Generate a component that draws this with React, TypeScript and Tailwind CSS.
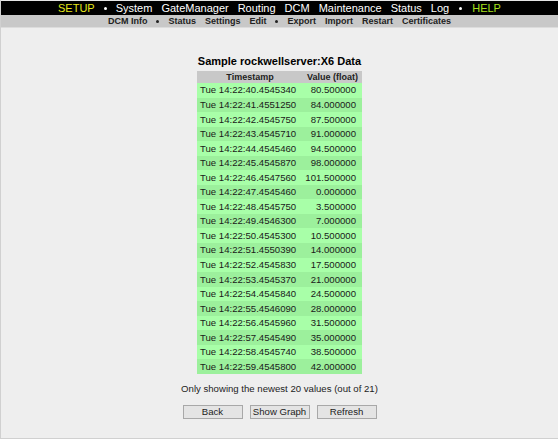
const rows: [string, string][] = [
  ['Tue 14:22:40.4545340', '80.500000'],
  ['Tue 14:22:41.4551250', '84.000000'],
  ['Tue 14:22:42.4545750', '87.500000'],
  ['Tue 14:22:43.4545710', '91.000000'],
  ['Tue 14:22:44.4545460', '94.500000'],
  ['Tue 14:22:45.4545870', '98.000000'],
  ['Tue 14:22:46.4547560', '101.500000'],
  ['Tue 14:22:47.4545460', '0.000000'],
  ['Tue 14:22:48.4545750', '3.500000'],
  ['Tue 14:22:49.4546300', '7.000000'],
  ['Tue 14:22:50.4545300', '10.500000'],
  ['Tue 14:22:51.4550390', '14.000000'],
  ['Tue 14:22:52.4545830', '17.500000'],
  ['Tue 14:22:53.4545370', '21.000000'],
  ['Tue 14:22:54.4545840', '24.500000'],
  ['Tue 14:22:55.4546090', '28.000000'],
  ['Tue 14:22:56.4545960', '31.500000'],
  ['Tue 14:22:57.4545490', '35.000000'],
  ['Tue 14:22:58.4545740', '38.500000'],
  ['Tue 14:22:59.4545800', '42.000000'],
];

const mainNav = ['System', 'GateManager', 'Routing', 'DCM', 'Maintenance', 'Status', 'Log'];

const Dot = ({ className = '' }: { className?: string }) => (
  <span className={`inline-block w-[3px] h-[3px] rounded-full bg-white ${className}`} />
);

const SubDot = () => <span className="inline-block w-[3px] h-[3px] rounded-full bg-[#222]" />;

export default function App() {
  return (
    <div
      className="w-[558px] h-[439px] flex flex-col bg-[#eeeeee] border-l border-b border-[#d0d0d0] overflow-hidden"
      style={{ fontFamily: '"Liberation Sans", Arial, sans-serif' }}
    >
      {/* top menu */}
      <div className="h-px bg-[#e6e6e6]" />
      <div className="h-[14px] bg-black flex items-center justify-center text-[11px] leading-none text-white">
        <span className="text-[#e6e619]">SETUP</span>
        <Dot className="mx-[9px]" />
        <div className="flex gap-[9px]">
          {mainNav.map((item) => (
            <span key={item}>{item}</span>
          ))}
        </div>
        <Dot className="mx-[10px]" />
        <span className="text-[#a8e01c]">HELP</span>
      </div>

      {/* sub menu */}
      <div className="h-[13px] bg-[#c8c8c8] border-b border-[#dcdcdc] flex items-center justify-center gap-[9px] text-[9px] font-bold leading-none text-[#222]">
        <span>DCM Info</span>
        <SubDot />
        <span>Status</span>
        <span>Settings</span>
        <span>Edit</span>
        <SubDot />
        <span>Export</span>
        <span>Import</span>
        <span>Restart</span>
        <span>Certificates</span>
      </div>

      {/* content */}
      <div className="flex flex-col items-center pt-[28px]">
        <div className="text-[11px] font-bold text-black leading-none mb-[4px]">Sample rockwellserver:X6 Data</div>
        <div className="w-[165px] text-[9.6px] leading-none">
          <div className="grid grid-cols-[106px_59px] h-[12px] items-center bg-[#c8c8c8] font-bold text-[9px] text-[#222]">
            <span className="text-center">Timestamp</span>
            <span className="text-center">Value (float)</span>
          </div>
          {rows.map(([ts, val], i) => (
            <div
              key={ts}
              className={`grid grid-cols-[106px_59px] h-[14.55px] items-center text-[#1a1a1a] ${
                i % 2 === 0 ? 'bg-[#a8ffa8]' : 'bg-[#9cf09c]'
              }`}
            >
              <span className="pl-[3px] whitespace-nowrap">{ts}</span>
              <span className="text-right pr-[6px] whitespace-nowrap">{val}</span>
            </div>
          ))}
        </div>

        <div className="mt-[10px] text-[9.6px] text-[#222] leading-none">
          Only showing the newest 20 values (out of 21)
        </div>

        <div className="mt-[11px] flex gap-[7px]">
          {['Back', 'Show Graph', 'Refresh'].map((label) => (
            <button
              key={label}
              className="w-[60px] h-[14px] bg-[#e4e4e4] border border-[#a8a8a8] text-[9.6px] leading-none text-[#222]"
            >
              {label}
            </button>
          ))}
        </div>
      </div>
    </div>
  );
}
